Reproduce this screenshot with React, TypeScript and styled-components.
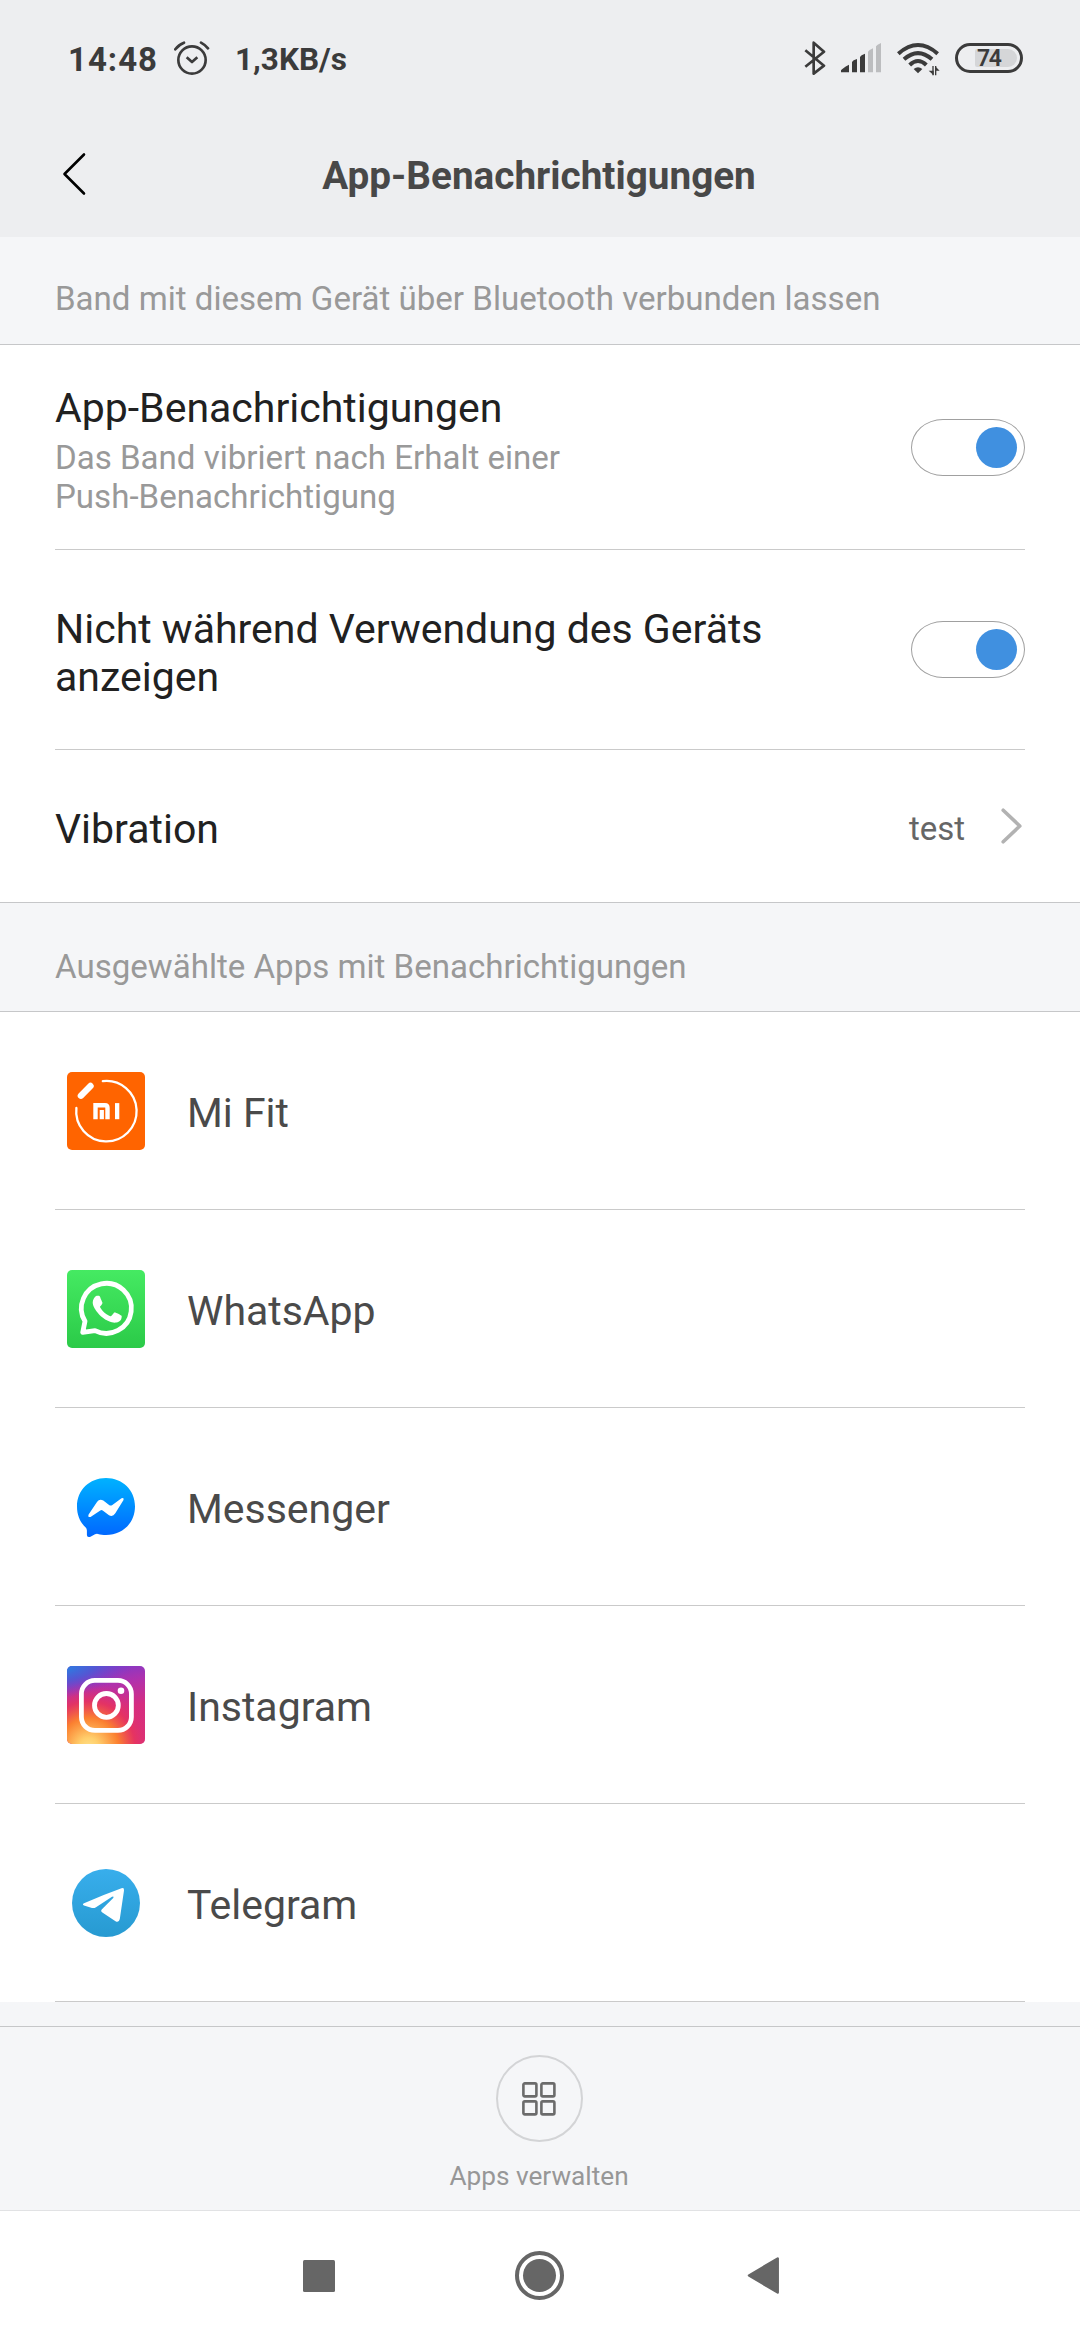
import React, { useState } from "react";
import styled, { createGlobalStyle } from "styled-components";

const GlobalStyle = createGlobalStyle`
  * { box-sizing: border-box; }
  body { margin: 0; background: #fff; font-family: Roboto, "Noto Sans", sans-serif; }
  svg { display: block; flex: none; }
`;

const Screen = styled.div`
  width: 1080px;
  height: 2340px;
  display: flex;
  flex-direction: column;
  background: #f5f6f8;
  overflow: hidden;
`;

const Header = styled.header`
  height: 237px;
  flex: none;
  background: #edeef0;
`;

const StatusBar = styled.div`
  height: 116px;
  padding: 0 57px 0 68px;
  display: flex;
  align-items: center;
  color: #3b3b3b;
`;

const Clock = styled.span`
  font-size: 33px;
  font-weight: 700;
  letter-spacing: 1px;
  width: 106px;
  padding-top: 3px;
`;

const NetSpeed = styled.span`
  font-size: 31.5px;
  font-weight: 700;
  margin-left: 25px;
  padding-top: 3px;
  flex: 1;
`;

const StatusIcons = styled.div`
  display: flex;
  align-items: center;
  gap: 15.5px;
`;

const Battery = styled.div`
  width: 68px;
  height: 30px;
  border: 3px solid #3b3b3b;
  border-radius: 15px;
  padding: 3px;
  display: flex;
`;

const BatteryLevel = styled.div`
  margin-left: 14px;
  width: 42px;
  height: 18px;
  background: #d5d6d8;
  border-radius: 2px 9px 9px 2px;
  font-size: 23px;
  font-weight: 600;
  letter-spacing: -1.4px;
  line-height: 19px;
  padding-left: 2px;
`;

const TitleBar = styled.div`
  height: 116px;
  padding: 0 64px 0 62px;
  display: grid;
  grid-template-columns: 24px 1fr 24px;
  align-items: center;
`;

const Title = styled.h1`
  margin: 0;
  padding-top: 4px;
  text-align: center;
  font-size: 38.7px;
  font-weight: 700;
  line-height: 46px;
  color: #484848;
`;

const SectionLabel = styled.div<{ $height: number; $bottom: number }>`
  height: ${(p) => p.$height}px;
  flex: none;
  padding: 0 55px ${(p) => p.$bottom}px;
  display: flex;
  align-items: flex-end;
  border-bottom: 1px solid #c6c7c9;
  font-size: 33.1px;
  line-height: 39px;
  color: #999;
`;

const List = styled.div<{ $closed?: boolean }>`
  background: #fff;
  flex: none;
  padding: 0 55px;
  border-bottom: ${(p) => (p.$closed ? "1px solid #c6c7c9" : "none")};
`;

const Row = styled.div<{ $height: number; $last?: boolean }>`
  height: ${(p) => p.$height}px;
  display: flex;
  align-items: center;
  justify-content: space-between;
  border-bottom: ${(p) => (p.$last ? "none" : "1px solid #cacaca")};
`;

const RowText = styled.div`
  padding-top: 6px;
`;

const RowTitle = styled.div`
  font-size: 41px;
  line-height: 48px;
  color: #212121;
`;

const RowNote = styled.div`
  margin-top: 6px;
  font-size: 33.1px;
  line-height: 39px;
  color: #999;
`;

const Track = styled.button<{ $on: boolean }>`
  width: 114px;
  height: 57px;
  padding: 0 7px;
  border: 1px solid #a0a0a0;
  border-radius: 32px / 28.5px;
  background: #fff;
  display: flex;
  align-items: center;
  justify-content: ${(p) => (p.$on ? "flex-end" : "flex-start")};
`;

const Knob = styled.span<{ $on: boolean }>`
  width: 41px;
  height: 41px;
  border-radius: 50%;
  background: ${(p) => (p.$on ? "#4090e0" : "#bbb")};
`;

const RowValue = styled.div`
  display: flex;
  align-items: center;
  gap: 36px;
  padding-right: 3px;
  font-size: 33px;
  color: #666;
`;

const ValueText = styled.span`
  padding-top: 4px;
`;

const AppRow = styled.div`
  height: 198px;
  padding: 1px 12px 0;
  display: flex;
  align-items: center;
  gap: 42px;
  border-bottom: 1px solid #cacaca;
`;

const AppName = styled.span`
  padding-top: 4px;
  font-size: 41px;
  line-height: 48px;
  color: #4a4a4a;
`;

const Spacer = styled.div`
  height: 24px;
  flex: none;
`;

const ManageBar = styled.div`
  height: 184px;
  flex: none;
  padding: 28px 2px 0 0;
  border-top: 1px solid #c6c7c9;
  display: flex;
  flex-direction: column;
  align-items: center;
  gap: 19px;
`;

const ManageCircle = styled.div`
  width: 87px;
  height: 87px;
  border: 2px solid #d3d4d6;
  border-radius: 50%;
  display: flex;
  align-items: center;
  justify-content: center;
`;

const ManageLabel = styled.div`
  font-size: 26.2px;
  line-height: 31px;
  color: #979797;
`;

const NavBar = styled.nav`
  height: 130px;
  flex: none;
  background: #fff;
  border-top: 1px solid #e1e2e4;
  padding-left: 303px;
  display: grid;
  grid-template-columns: 212px 232px 1fr;
  align-items: center;
`;

const AlarmIcon = () => (
  <svg width="36" height="36" viewBox="402 60 108 108" fill="none" stroke="#3b3b3b" strokeWidth="8" strokeLinecap="round">
    <circle cx="456" cy="120" r="41" />
    <path d="M440 112l16 14 16-14" strokeLinejoin="round" strokeLinecap="butt" />
    <path d="M406 88q10-14 26-20M504 85q-8-10-21-17" />
  </svg>
);

const BluetoothIcon = () => (
  <svg width="22" height="34" viewBox="71 62 66 102" fill="none" stroke="#3b3b3b" strokeWidth="8" strokeLinejoin="round">
    <path d="M75 90L131 136L100 160V67L131 94L75 139" />
  </svg>
);

const SignalIcon = () => (
  <svg width="40" height="30" viewBox="183 68 120 90" fill="#3b3b3b">
    <path d="M183 156v-6q2-5 24-17v23zM216 156v-31l5-5 10-4v40zM240 156v-46l5-5 10-5v56z" />
    <path d="M264 156V94l5-5 10-5v72zM288 156V78l5-5 10-5v88z" fill="#bcbdbf" />
  </svg>
);

const WifiIcon = () => (
  <svg width="43" height="36" viewBox="351 60 129 108" fill="none" stroke="#3b3b3b" strokeWidth="12">
    <path d="M355 101Q414 49 473 101" />
    <path d="M372 118Q414 81 456 118" />
    <path d="M389 135Q414 111 439 135" />
    <path d="M401 147q13-10 26 0l-13 13z" fill="#3b3b3b" stroke="none" />
    <path d="M459 138v28M467 138v28" strokeWidth="4" />
    <path d="M461 166l-15-14h15zM465 138l14 14h-14z" fill="#3b3b3b" stroke="none" />
  </svg>
);

const BackIcon = () => (
  <svg width="24" height="44" viewBox="0 0 24 44" fill="none" stroke="#000" strokeWidth="2.6" strokeLinecap="round" strokeLinejoin="round">
    <path d="M22 2.5L2.5 22L22 41.5" />
  </svg>
);

const ForwardIcon = () => (
  <svg width="21" height="36" viewBox="0 0 21 36" fill="none" stroke="#b2b2b2" strokeWidth="3.6" strokeLinecap="round" strokeLinejoin="round">
    <path d="M2.2 2.2L18.8 18L2.2 33.8" />
  </svg>
);

const MiFitIcon = () => (
  <svg width="78" height="78">
    <rect width="78" height="78" rx="5" fill="#ff6400" />
    <g fill="none" stroke="#fff" strokeLinecap="round">
      <path d="M35.8 9.2A30.2 30.2 0 1 1 9.4 35.8" strokeWidth="2.3" />
      <path d="M13.9 23.7L23.5 14" strokeWidth="6.4" />
    </g>
    <path d="M28.500 47.200V33.300H38q2.500 0 2.500 2.500V47.200" fill="none" stroke="#fff" strokeWidth="4.400" />
    <rect x="32.700" y="38" width="4.200" height="9.200" fill="#fff" />
    <rect x="48" y="31.100" width="4.300" height="16.100" fill="#fff" />
  </svg>
);

const WhatsAppIcon = () => (
  <svg width="78" height="78">
    <defs>
      <linearGradient id="wa" x2="0" y2="1">
        <stop stopColor="#45ea62" />
        <stop offset="1" stopColor="#2bca48" />
      </linearGradient>
    </defs>
    <rect width="78" height="78" rx="5" fill="url(#wa)" />
    <path d="M15.700 62.400L18 51.300A25 25 0 1 1 28 60.600Z" fill="none" stroke="#fff" strokeWidth="4.800" strokeLinejoin="round" />
    <path
      fill="#fff"
      transform="translate(11.3 10.4) scale(2.4)"
      d="M17.472 14.382c-.297-.149-1.758-.867-2.03-.967-.273-.099-.471-.148-.67.15-.197.297-.767.966-.94 1.164-.173.199-.347.223-.644.075-.297-.15-1.255-.463-2.39-1.475-.883-.788-1.48-1.761-1.653-2.059-.173-.297-.018-.458.13-.606.134-.133.298-.347.446-.52.149-.174.198-.298.298-.497.099-.198.05-.371-.025-.52-.075-.149-.669-1.612-.916-2.207-.242-.579-.487-.5-.669-.51-.173-.008-.371-.01-.57-.01-.198 0-.52.074-.792.372-.272.297-1.04 1.016-1.04 2.479 0 1.462 1.065 2.875 1.213 3.074.149.198 2.096 3.2 5.077 4.487.709.306 1.262.489 1.694.625.712.227 1.36.195 1.871.118.571-.085 1.758-.719 2.006-1.413.248-.694.248-1.289.173-1.413-.074-.124-.272-.198-.57-.347"
    />
  </svg>
);

const MessengerIcon = () => (
  <svg width="78" height="78">
    <defs>
      <linearGradient id="ms" x2="0" y2="1">
        <stop stopColor="#00b2ff" />
        <stop offset="1" stopColor="#0066ff" />
      </linearGradient>
    </defs>
    <path
      fill="url(#ms)"
      d="M39 10C55.5 10 68 22 68 38.5S55.5 67 39 67C36 67 33.5 66.6 31 66Q29.5 65.6 28 66.300L23.500 68.700Q20 70 19.900 67V62.500Q19.900 60.500 18.500 59.200C13 54.300 10 47 10 38.500C10 22 22.500 10 39 10Z"
    />
    <path
      fill="#fff"
      d="M21.600 46.500L30 34Q32.500 30.300 36.300 32.500L42.400 37.200Q43.700 38 45 37.200L54.500 30.200Q57.300 29.200 56.500 32L48.300 45.300Q45.700 49.200 42 47.200L35.700 42.500Q34.500 41.700 33.300 42.500L23.500 49Q20.500 49.600 21.600 46.500Z"
    />
  </svg>
);

const InstagramIcon = () => (
  <svg width="78" height="78">
    <defs>
      <linearGradient id="ig-base" x1="0.3" y1="0" x2="0.5" y2="1">
        <stop stopColor="#7a3bcb" />
        <stop offset=".28" stopColor="#b031ad" />
        <stop offset=".6" stopColor="#d62d80" />
        <stop offset="1" stopColor="#d9307a" />
      </linearGradient>
      <radialGradient id="ig-warm" cx="0.28" cy="1.05" r="0.85">
        <stop stopColor="#ffe08a" />
        <stop offset=".15" stopColor="#ffcf6c" />
        <stop offset=".45" stopColor="#fb8030" />
        <stop offset=".7" stopColor="#e8345c" stopOpacity=".85" />
        <stop offset="1" stopColor="#d62d80" stopOpacity="0" />
      </radialGradient>
      <radialGradient id="ig-cool" gradientTransform="rotate(-12) scale(1 .38)" cx="0" cy="0.1" r="0.95">
        <stop stopColor="#2f7ae0" />
        <stop offset=".4" stopColor="#4a5cd6" stopOpacity=".85" />
        <stop offset="1" stopColor="#7a3bcb" stopOpacity="0" />
      </radialGradient>
    </defs>
    <rect width="78" height="78" rx="5" fill="url(#ig-base)" />
    <rect width="78" height="78" rx="5" fill="url(#ig-warm)" />
    <rect width="78" height="78" rx="5" fill="url(#ig-cool)" />
    <g fill="none" stroke="#fff" strokeWidth="4.8">
      <rect x="14.4" y="14.4" width="50" height="50" rx="13.5" />
      <circle cx="39.4" cy="39.4" r="11.9" />
    </g>
    <circle cx="54" cy="24.7" r="3.3" fill="#fff" />
  </svg>
);

const TelegramIcon = () => (
  <svg width="78" height="78">
    <defs>
      <linearGradient id="tg" x2="0" y2="1">
        <stop stopColor="#38aeec" />
        <stop offset="1" stopColor="#279ad1" />
      </linearGradient>
    </defs>
    <circle cx="39" cy="39" r="34" fill="url(#tg)" />
    <path
      fill="#fff"
      d="M17 39.300Q36 30.800 54.500 24.200Q57.400 23.400 57 26.500L52.800 55Q52 59 48.500 57.300L35 48.200Q33.300 46.900 34.700 45.400L46.200 34Q47.400 31.800 45 32.700L29 43.200Q27.300 44.400 25 44L17 41.600Q14.900 40.500 17 39.300Z"
    />
  </svg>
);

const GridIcon = () => (
  <svg width="34" height="34" viewBox="0 0 34 34" fill="none" stroke="#6b6b6b" strokeWidth="2.6">
    <rect x="1.4" y="1.4" width="13" height="13" rx="1.4" />
    <rect x="19.4" y="1.4" width="13" height="13" rx="1.4" />
    <rect x="1.4" y="19.4" width="13" height="13" rx="1.4" />
    <rect x="19.4" y="19.4" width="13" height="13" rx="1.4" />
  </svg>
);

const RecentsIcon = () => (
  <svg width="32" height="32">
    <rect x="0" y="0" width="32" height="32" rx="1.5" fill="#666" />
  </svg>
);

const HomeIcon = () => (
  <svg width="49" height="49">
    <circle cx="24.5" cy="24.5" r="22.5" fill="none" stroke="#666" strokeWidth="4" />
    <circle cx="24.5" cy="24.5" r="16.5" fill="#666" />
  </svg>
);

const NavBackIcon = () => (
  <svg width="33" height="37">
    <path d="M2 18.500L30.700 1.500V35.500Z" fill="#666" stroke="#666" strokeWidth="2.500" strokeLinejoin="round" />
  </svg>
);

const apps = [
  { name: "Mi Fit", Icon: MiFitIcon },
  { name: "WhatsApp", Icon: WhatsAppIcon },
  { name: "Messenger", Icon: MessengerIcon },
  { name: "Instagram", Icon: InstagramIcon },
  { name: "Telegram", Icon: TelegramIcon },
];

function Switch() {
  const [on, setOn] = useState(true);
  return (
    <Track $on={on} onClick={() => setOn(!on)}>
      <Knob $on={on} />
    </Track>
  );
}

export default function App() {
  return (
    <Screen>
      <GlobalStyle />
      <Header>
        <StatusBar>
          <Clock>14:48</Clock>
          <AlarmIcon />
          <NetSpeed>1,3KB/s</NetSpeed>
          <StatusIcons>
            <BluetoothIcon />
            <SignalIcon />
            <WifiIcon />
            <Battery>
              <BatteryLevel>74</BatteryLevel>
            </Battery>
          </StatusIcons>
        </StatusBar>
        <TitleBar>
          <BackIcon />
          <Title>App-Benachrichtigungen</Title>
        </TitleBar>
      </Header>

      <SectionLabel $height={108} $bottom={26}>
        Band mit diesem Gerät über Bluetooth verbunden lassen
      </SectionLabel>
      <List $closed>
        <Row $height={205}>
          <RowText>
            <RowTitle>App-Benachrichtigungen</RowTitle>
            <RowNote>
              Das Band vibriert nach Erhalt einer
              <br />
              Push-Benachrichtigung
            </RowNote>
          </RowText>
          <Switch />
        </Row>
        <Row $height={200}>
          <RowText>
            <RowTitle>
              Nicht während Verwendung des Geräts
              <br />
              anzeigen
            </RowTitle>
          </RowText>
          <Switch />
        </Row>
        <Row $height={152} $last>
          <RowText>
            <RowTitle>Vibration</RowTitle>
          </RowText>
          <RowValue>
            <ValueText>test</ValueText>
            <ForwardIcon />
          </RowValue>
        </Row>
      </List>

      <SectionLabel $height={109} $bottom={25}>
        Ausgewählte Apps mit Benachrichtigungen
      </SectionLabel>
      <List>
        {apps.map(({ name, Icon }) => (
          <AppRow key={name}>
            <Icon />
            <AppName>{name}</AppName>
          </AppRow>
        ))}
      </List>

      <Spacer />
      <ManageBar>
        <ManageCircle>
          <GridIcon />
        </ManageCircle>
        <ManageLabel>Apps verwalten</ManageLabel>
      </ManageBar>
      <NavBar>
        <RecentsIcon />
        <HomeIcon />
        <NavBackIcon />
      </NavBar>
    </Screen>
  );
}
